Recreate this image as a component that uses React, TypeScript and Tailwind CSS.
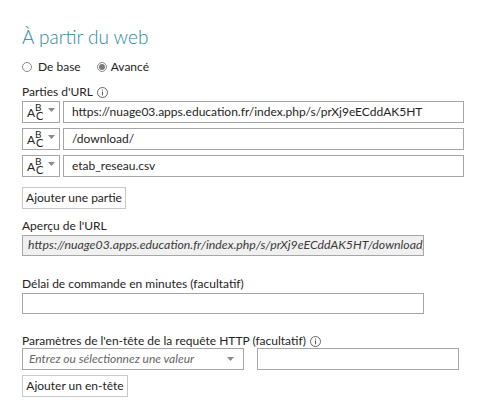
import React from "react";

const font = { fontFamily: 'Lato, "Noto Sans", sans-serif' };

function AbcIcon() {
  return (
    <div className="flex items-center h-full w-[38px] border border-[#a6a6a6] bg-white shrink-0">
      <div className="relative w-[21px] h-full ml-[3px] text-[#252423]">
        <span className="absolute left-[1px] top-[5px] text-[12px] leading-[12px]">A</span>
        <span className="absolute left-[9px] top-[1px] text-[10px] leading-[8px]">B</span>
        <span className="absolute left-[10px] top-[9px] text-[11px] leading-[10px]">C</span>
      </div>
      <svg width="7" height="4" viewBox="0 0 7 4" className="ml-[1px] mt-[-4px]">
        <path d="M0 0 L7 0 L3.5 4 Z" fill="#8a8a8a" />
      </svg>
    </div>
  );
}

function InfoIcon() {
  return (
    <svg width="11" height="11" viewBox="0 0 11 11" className="inline-block ml-[4px]">
      <circle cx="5.5" cy="5.5" r="5" fill="none" stroke="#555" strokeWidth="0.9" />
      <rect x="5" y="4.5" width="1" height="3.8" fill="#555" />
      <rect x="5" y="2.6" width="1" height="1" fill="#555" />
    </svg>
  );
}

function UrlRow({ value }: { value: string }) {
  return (
    <div className="flex h-[22px] gap-[3px]">
      <AbcIcon />
      <div className="flex items-center w-[401px] h-full border border-[#a6a6a6] bg-white pl-[8px] text-[12px] text-[#252423] whitespace-nowrap overflow-hidden">
        {value}
      </div>
    </div>
  );
}

function Button({ children, w }: { children: React.ReactNode; w: string }) {
  return (
    <div className={`flex items-center justify-center h-[22px] ${w} border border-[#c8c8c8] bg-white text-[12px] text-[#252423] whitespace-nowrap`}>
      {children}
    </div>
  );
}

export default function App() {
  return (
    <div className="w-[481px] h-[404px] bg-white overflow-hidden pt-[22px] pl-[22px] flex flex-col text-[#252423]" style={font}>
      <h1 className="h-[30px] leading-[30px] text-[19px] font-light text-[#2b8a9c] whitespace-nowrap">À partir du web</h1>

      <div className="mt-[7px] h-[16px] flex items-center text-[12px]">
        <span className="w-[10px] h-[10px] rounded-full border border-[#8a8a8a] bg-white" />
        <span className="ml-[6px]">De base</span>
        <span className="ml-[16px] w-[10px] h-[10px] rounded-full border border-[#8a8a8a] bg-white flex items-center justify-center">
          <span className="w-[6px] h-[6px] rounded-full bg-[#7a7a7a]" />
        </span>
        <span className="ml-[4px]">Avancé</span>
      </div>

      <div className="mt-[9px] h-[16px] leading-[16px] text-[12px] flex items-center">
        Parties d'URL
        <InfoIcon />
      </div>

      <div className="mt-[1px] flex flex-col gap-[5px]">
        <UrlRow value="https://nuage03.apps.education.fr/index.php/s/prXj9eECddAK5HT" />
        <UrlRow value="/download/" />
        <UrlRow value="etab_reseau.csv" />
      </div>

      <div className="mt-[10px]">
        <Button w="w-[104px]">Ajouter une partie</Button>
      </div>

      <div className="mt-[9px] h-[16px] leading-[16px] text-[12px]">Aperçu de l'URL</div>
      <div className="mt-[1px] w-[402px] h-[21px] border border-[#a6a6a6] bg-[#f0f0f0] flex items-center pl-[5px] text-[12.3px] italic text-[#3b3a39] whitespace-nowrap overflow-hidden">
        <span className="whitespace-nowrap">https://nuage03.apps.education.fr/index.php/s/prXj9eECddAK5HT/download/etab_reseau.csv</span>
      </div>

      <div className="mt-[20px] h-[16px] leading-[16px] text-[12px]">Délai de commande en minutes (facultatif)</div>
      <div className="mt-[1px] w-[402px] h-[21px] border border-[#a6a6a6] bg-white" />

      <div className="mt-[20px] h-[14px] leading-[14px] text-[12px] flex items-center">
        Paramètres de l'en-tête de la requête HTTP (facultatif)
        <InfoIcon />
      </div>
      <div className="flex gap-[13px] h-[22px]">
        <div className="w-[222px] h-full border border-[#a6a6a6] bg-white flex items-center pl-[6px] pr-[9px] text-[12px] italic text-[#666]">
          <span className="flex-1 whitespace-nowrap">Entrez ou sélectionnez une valeur</span>
          <svg width="7" height="4" viewBox="0 0 7 4">
            <path d="M0 0 L7 0 L3.5 4 Z" fill="#8a8a8a" />
          </svg>
        </div>
        <div className="w-[202px] h-full border border-[#a6a6a6] bg-white" />
      </div>

      <div className="mt-[5px]">
        <Button w="w-[106px]">Ajouter un en-tête</Button>
      </div>
    </div>
  );
}
